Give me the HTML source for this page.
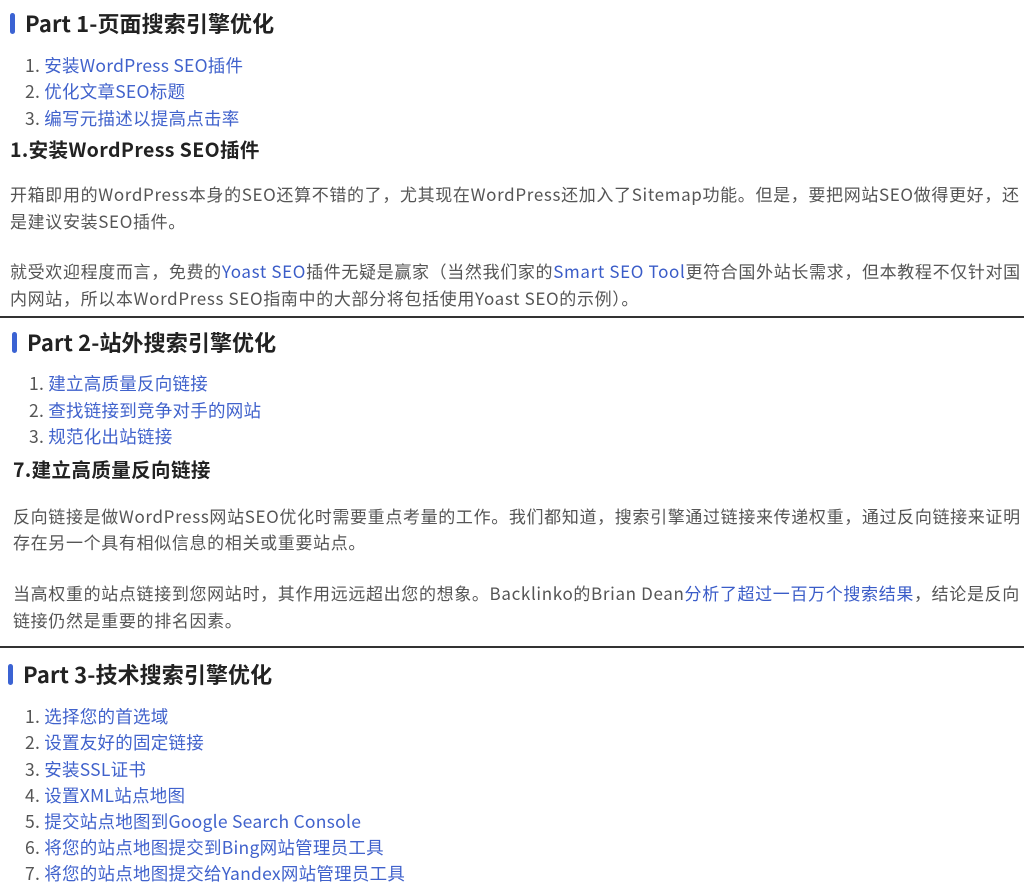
<!DOCTYPE html>
<html><head><meta charset="utf-8"><style>
body{margin:0;width:1024px;height:884px;background:#fff;position:relative;overflow:hidden;font-family:"Noto Sans CJK SC","Liberation Sans",sans-serif;}
.a{position:absolute;white-space:nowrap;line-height:1;}
.h{font-size:22px;font-weight:bold;color:#222;letter-spacing:0.1px;margin-top:-1px}
.bar{position:absolute;width:5px;height:21px;background:#3b63d3;border-radius:3px;}
.li{font-size:17.5px;color:#555;letter-spacing:0.25px;margin-top:1px}
.li span{color:#4062cc;}
.s{font-size:19.5px;font-weight:bold;color:#222;letter-spacing:0.4px;margin-top:-1px}
.p{font-size:17px;color:#555;letter-spacing:0.65px;margin-top:-1px}
.p span{color:#3a5cc8;}
.hr{position:absolute;left:0;width:1024px;height:2px;background:#333;}
</style></head><body>
<div class="bar" style="left:10px;top:13px"></div>
<div class="a h" style="left:25px;top:13px">Part 1-页面搜索引擎优化</div>
<div class="a li" style="left:25px;top:56px">1. <span>安装WordPress SEO插件</span></div>
<div class="a li" style="left:25px;top:82px">2. <span>优化文章SEO标题</span></div>
<div class="a li" style="left:25px;top:109px">3. <span>编写元描述以提高点击率</span></div>
<div class="a s" style="left:10px;top:140px">1.安装WordPress SEO插件</div>
<div class="a p" style="left:10px;top:186px">开箱即用的WordPress本身的SEO还算不错的了，尤其现在WordPress还加入了Sitemap功能。但是，要把网站SEO做得更好，还</div>
<div class="a p" style="left:10px;top:213px">是建议安装SEO插件。</div>
<div class="a p" style="left:10px;top:263px">就受欢迎程度而言，免费的<span>Yoast SEO</span>插件无疑是赢家（当然我们家的<span>Smart SEO Tool</span>更符合国外站长需求，但本教程不仅针对国</div>
<div class="a p" style="left:10px;top:290px">内网站，所以本WordPress SEO指南中的大部分将包括使用Yoast SEO的示例）。</div>
<div class="hr" style="top:316px"></div>
<div class="bar" style="left:12px;top:332px"></div>
<div class="a h" style="left:27px;top:332px">Part 2-站外搜索引擎优化</div>
<div class="a li" style="left:29px;top:374px">1. <span>建立高质量反向链接</span></div>
<div class="a li" style="left:29px;top:401px">2. <span>查找链接到竞争对手的网站</span></div>
<div class="a li" style="left:29px;top:427px">3. <span>规范化出站链接</span></div>
<div class="a s" style="left:13px;top:460px">7.建立高质量反向链接</div>
<div class="a p" style="left:13px;top:508px">反向链接是做WordPress网站SEO优化时需要重点考量的工作。我们都知道，搜索引擎通过链接来传递权重，通过反向链接来证明</div>
<div class="a p" style="left:13px;top:534px">存在另一个具有相似信息的相关或重要站点。</div>
<div class="a p" style="left:13px;top:585px">当高权重的站点链接到您网站时，其作用远远超出您的想象。Backlinko的Brian Dean<span>分析了超过一百万个搜索结果</span>，结论是反向</div>
<div class="a p" style="left:13px;top:612px">链接仍然是重要的排名因素。</div>
<div class="hr" style="top:646px"></div>
<div class="bar" style="left:8px;top:664px"></div>
<div class="a h" style="left:23px;top:664px">Part 3-技术搜索引擎优化</div>
<div class="a li" style="left:25px;top:707px">1. <span>选择您的首选域</span></div>
<div class="a li" style="left:25px;top:733px">2. <span>设置友好的固定链接</span></div>
<div class="a li" style="left:25px;top:760px">3. <span>安装SSL证书</span></div>
<div class="a li" style="left:25px;top:786px">4. <span>设置XML站点地图</span></div>
<div class="a li" style="left:25px;top:812px">5. <span>提交站点地图到Google Search Console</span></div>
<div class="a li" style="left:25px;top:838px">6. <span>将您的站点地图提交到Bing网站管理员工具</span></div>
<div class="a li" style="left:25px;top:864px">7. <span>将您的站点地图提交给Yandex网站管理员工具</span></div>
</body></html>
